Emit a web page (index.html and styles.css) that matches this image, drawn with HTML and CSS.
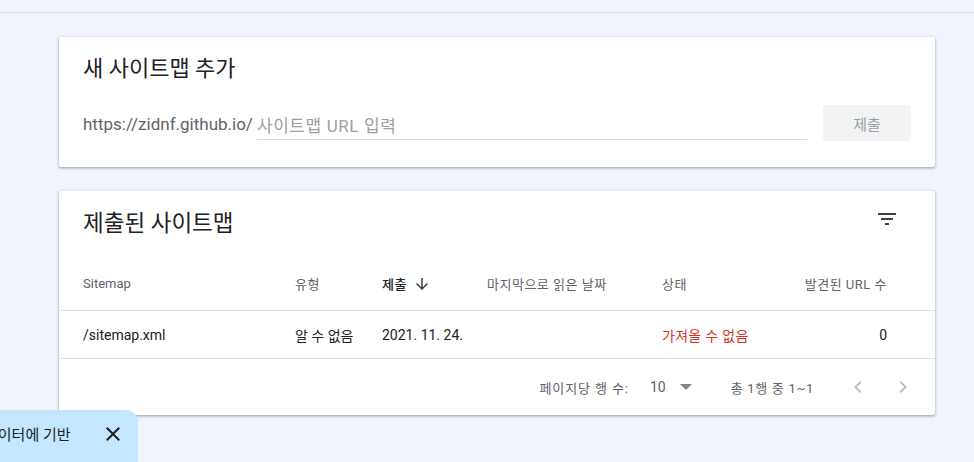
FILE: index.html
```html
<!DOCTYPE html>
<html lang="ko">
<head>
<meta charset="utf-8">
<title>Sitemaps</title>
<link rel="stylesheet" href="styles.css">
</head>
<body>
<div class="topbar"></div>
<main class="main">
  <section class="card add-card">
    <h2 class="title-sm">새 사이트맵 추가</h2>
    <div class="url-row">
      <span class="prefix">https://zidnf.github.io/</span>
      <div class="input-wrap"><span class="placeholder">사이트맵 URL 입력</span></div>
      <button class="submit-btn" type="button">제출</button>
    </div>
  </section>

  <section class="card list-card">
    <div class="list-head">
      <h2 class="title-lg">제출된 사이트맵</h2>
      <svg class="filter-icon" width="24" height="24" viewBox="0 0 24 24"><path d="M10 18h4v-2h-4v2zM3 6v2h18V6H3zm3 7h12v-2H6v2z" fill="#3c4043"/></svg>
    </div>
    <div class="grid header-row">
      <div class="hcell">Sitemap</div>
      <div class="hcell ko">유형</div>
      <div class="hcell ko sorted">제출 <svg class="arrow" width="18" height="18" viewBox="0 0 24 24"><path d="M20 12l-1.41-1.41L13 16.17V4h-2v12.17l-5.58-5.59L4 12l8 8 8-8z" fill="#3c4043"/></svg></div>
      <div class="hcell ko">마지막으로 읽은 날짜</div>
      <div class="hcell ko">상태</div>
      <div class="hcell ko right">발견된 URL 수</div>
    </div>
    <div class="grid data-row">
      <div class="dcell">/sitemap.xml</div>
      <div class="dcell">알 수 없음</div>
      <div class="dcell">2021. 11. 24.</div>
      <div class="dcell"></div>
      <div class="dcell error">가져올 수 없음</div>
      <div class="dcell right">0</div>
    </div>
    <div class="pager">
      <span class="pager-label ko">페이지당 행 수:</span>
      <span class="pager-select">10 <span class="tri"></span></span>
      <span class="pager-range ko">총 1행 중 1~1</span>
      <svg class="chev chev-left" width="24" height="24" viewBox="0 0 24 24"><path d="M15.41 7.41L14 6l-6 6 6 6 1.41-1.41L10.83 12z" fill="#bdc1c6"/></svg>
      <svg class="chev chev-right" width="24" height="24" viewBox="0 0 24 24"><path d="M10 6L8.59 7.41 13.17 12l-4.58 4.59L10 18l6-6z" fill="#bdc1c6"/></svg>
    </div>
  </section>
</main>

<div class="toast">
  <span class="toast-text">데이터에 기반</span>
  <svg class="toast-close" width="24" height="24" viewBox="0 0 24 24"><path d="M19 6.41L17.59 5 12 10.59 6.41 5 5 6.41 10.59 12 5 17.59 6.41 19 12 13.41 17.59 19 19 17.59 13.41 12z" fill="#1f1f1f"/></svg>
</div>
</body>
</html>
```
FILE: styles.css
```css
* { box-sizing: border-box; }
html, body { margin: 0; padding: 0; }
body {
  background: #f1f4fc;
  font-family: Roboto, "Noto Sans CJK KR", sans-serif;
  color: #202124;
  width: 974px;
  height: 462px;
  overflow: hidden;
  position: relative;
}
.topbar {
  height: 13px;
  border-bottom: 1px solid #dadce0;
}
.main {
  padding: 24px 0 0 59px;
  display: flex;
  flex-direction: column;
  gap: 24px;
}
.card {
  width: 876px;
  background: #fff;
  border-radius: 2px;
  box-shadow: 0 1px 2px rgba(60,64,67,.3), 0 1px 3px 1px rgba(60,64,67,.15);
}
.add-card {
  height: 130px;
  padding: 18px 24px 0 24px;
}
.title-sm {
  margin: 0;
  font-size: 22px;
  line-height: 28px;
  font-weight: 400;
  color: #202124;
}
.url-row {
  margin-top: 22px;
  display: flex;
  align-items: center;
  height: 36px;
}
.prefix {
  font-size: 17px;
  color: #5f6368;
  margin-right: 4px;
  position: relative;
  top: 1px;
}
.input-wrap {
  flex: 1;
  height: 33px;
  border-bottom: 1px solid #dadce0;
  display: flex;
  align-items: flex-end;
  padding-bottom: 2px;
}
.placeholder {
  font-size: 17px;
  letter-spacing: 0.6px;
  color: #9aa0a6;
}
.submit-btn {
  margin-left: 16px;
  width: 88px;
  height: 36px;
  border: none;
  border-radius: 4px;
  background: #f1f3f4;
  color: #9aa0a6;
  font-family: Roboto, "Noto Sans CJK KR", sans-serif;
  font-size: 15px;
  padding: 0;
}
.list-card {
  height: 224px;
  display: flex;
  flex-direction: column;
}
.list-head {
  height: 64px;
  padding: 18px 36px 0 24px;
  display: flex;
  justify-content: space-between;
  align-items: flex-start;
}
.title-lg {
  margin: 0;
  font-size: 22.5px;
  line-height: 28px;
  font-weight: 400;
  color: #202124;
}
.filter-icon { margin-top: -2px; }
.grid {
  display: grid;
  grid-template-columns: 212px 87px 105px 175px 120px 1fr;
  padding: 0 48px 0 24px;
  align-items: center;
}
.header-row {
  height: 56px;
  border-bottom: 1px solid #e0e0e0;
  font-size: 13px;
  color: #5f6368;
  padding-top: 2px;
}
.ko { letter-spacing: 0.5px; }
.hcell { display: flex; align-items: center; white-space: nowrap; }
.hcell.right, .dcell.right { justify-content: flex-end; text-align: right; }
.sorted { color: #202124; font-weight: 500; }
.arrow { margin-left: 6px; }
.data-row {
  height: 48px;
  border-bottom: 1px solid #e0e0e0;
  font-size: 14px;
  color: #202124;
}
.dcell { white-space: nowrap; }
.error { color: #d93025; letter-spacing: 0.3px; }
.pager {
  flex: 1;
  display: flex;
  align-items: center;
  justify-content: flex-end;
  padding-right: 20px;
  font-size: 13px;
  color: #5f6368;
}
.pager-label { margin-right: 21px; letter-spacing: 0.9px; }
.pager-select {
  font-size: 14px;
  display: flex;
  align-items: center;
  margin-right: 39px;
}
.tri {
  display: inline-block;
  width: 0; height: 0;
  margin-left: 14px;
  border-left: 6px solid transparent;
  border-right: 6px solid transparent;
  border-top: 6px solid #80868b;
}
.pager-range { margin-right: 32px; letter-spacing: 0.7px; }
.chev-left { margin-right: 21px; }
.toast {
  position: absolute;
  left: -24px;
  top: 410px;
  width: 162px;
  height: 60px;
  background: #c2e7ff;
  border-top-right-radius: 12px;
  display: flex;
  align-items: flex-start;
  padding: 13px 0 0 8px;
}
.toast-text {
  font-size: 15px;
  color: #1f1f1f;
  line-height: 24px;
  white-space: nowrap;
}
.toast-close {
  position: absolute;
  left: 125px;
  top: 12px;
}
```
